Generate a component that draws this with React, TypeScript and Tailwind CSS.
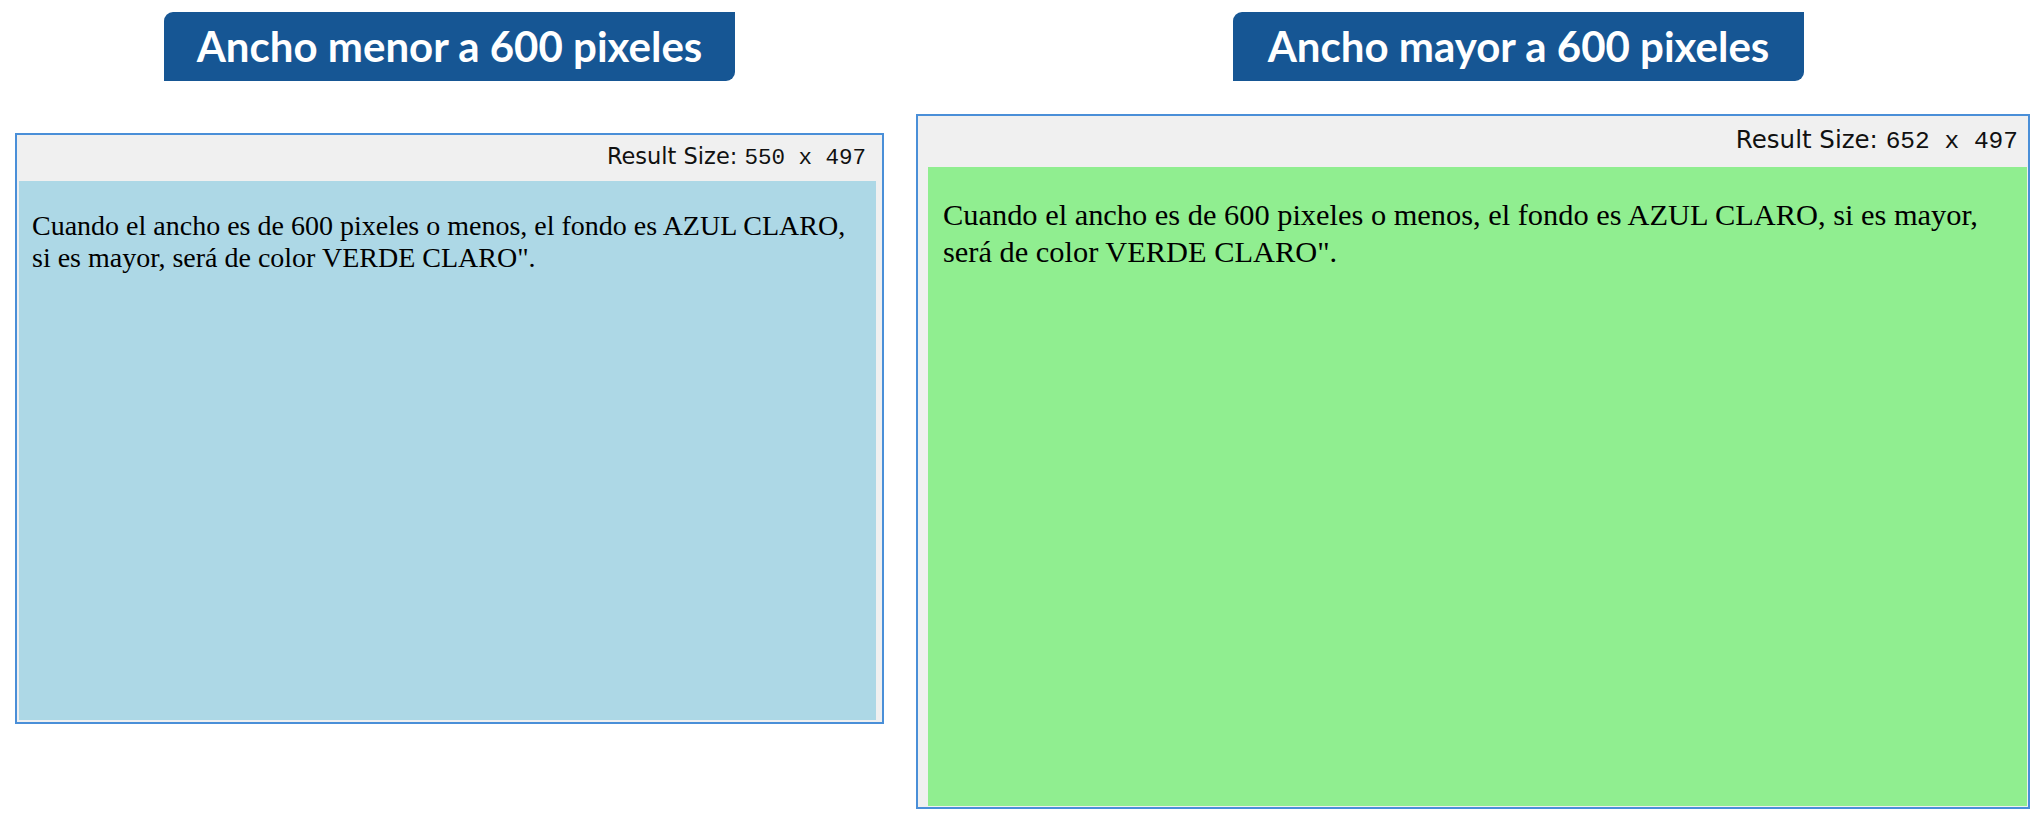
const panels = [
  {
    title: "Ancho menor a 600 pixeles",
    size: "550 x 497",
    lines: ["Cuando el ancho es de 600 pixeles o menos, el fondo es AZUL CLARO,", "si es mayor, será de color VERDE CLARO\"."],
  },
  {
    title: "Ancho mayor a 600 pixeles",
    size: "652 x 497",
    lines: ["Cuando el ancho es de 600 pixeles o menos, el fondo es AZUL CLARO, si es mayor,", "será de color VERDE CLARO\"."],
  },
];

function Title({ text, className }: { text: string; className: string }) {
  return (
    <div
      className={`h-[69px] w-[571px] bg-[#165694] rounded-tl-[9px] rounded-br-[9px] flex items-center justify-center text-white text-[42px] font-bold font-['Lato',sans-serif] ${className}`}
    >
      {text}
    </div>
  );
}

function SizeLabel({ size, className }: { size: string; className: string }) {
  return (
    <span className={`text-[#111] font-['DejaVu_Sans',sans-serif] ${className}`}>
      Result Size: <span className="font-['Liberation_Mono',monospace]">{size}</span>
    </span>
  );
}

export default function App() {
  const [small, large] = panels;
  return (
    <div className="w-[2040px] h-[822px] bg-white flex items-start pl-[15px] gap-[32px] overflow-hidden">
      <div className="flex flex-col pt-[12px]">
        <Title text={small.title} className="ml-[149px]" />
        <div className="mt-[52px] w-[869px] h-[591px] border-2 border-[#4a8fd8] bg-[#f0f0f0] flex flex-col">
          <div className="h-[46px] flex items-center justify-end pr-[16px]">
            <SizeLabel size={small.size} className="text-[22.5px]" />
          </div>
          <div className="flex-1 ml-[2px] mr-[6px] mb-[2px] bg-[#add8e6] pl-[13px] pt-[29px] text-[28px] leading-[32px] text-black font-['Liberation_Serif',serif]">
            {small.lines.map((l) => (
              <div key={l}>{l}</div>
            ))}
          </div>
        </div>
      </div>

      <div className="flex flex-col pt-[12px]">
        <Title text={large.title} className="ml-[317px]" />
        <div className="mt-[33px] w-[1114px] h-[695px] border-2 border-[#4a8fd8] bg-[#f0f0f0] flex flex-col">
          <div className="h-[51px] flex items-center justify-end pr-[10px]">
            <SizeLabel size={large.size} className="text-[24.5px]" />
          </div>
          <div className="flex-1 ml-[10px] mr-[1px] mb-[1px] bg-[#90ee90] pl-[15px] pt-[30px] text-[30.4px] leading-[37px] text-black font-['Liberation_Serif',serif]">
            {large.lines.map((l) => (
              <div key={l}>{l}</div>
            ))}
          </div>
        </div>
      </div>
    </div>
  );
}
